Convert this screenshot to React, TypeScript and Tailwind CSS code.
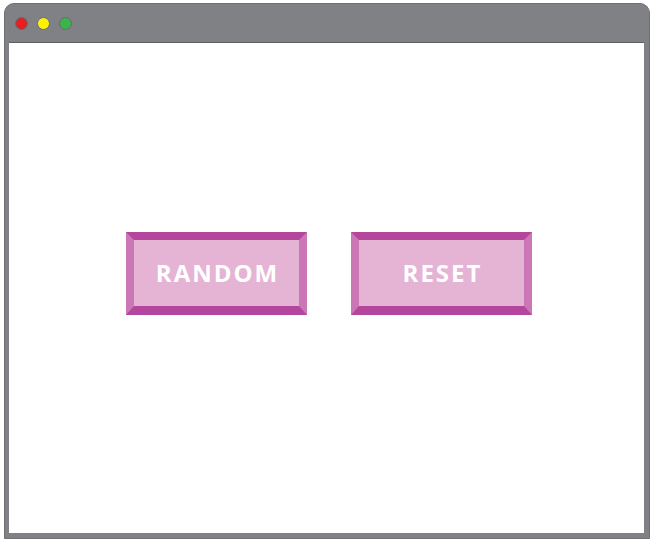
import React from 'react';

const Bevel: React.FC<{ label: string }> = ({ label }) => (
    <button className="w-[181px] h-[83px] bg-[#e5b4d4] border-x-8 border-t-8 border-b-[9px] border-t-[#b4469d] border-b-[#b4469d] border-x-[#cb76b5] flex items-center justify-center">
        <span className="text-white font-bold text-[24px] leading-none tracking-[2px] pl-[2px] font-['Open_Sans',sans-serif]">{label}</span>
    </button>
);

export default function App() {
    return (
        <div className="w-[654px] h-[542px] bg-white pt-[3px] pl-[4px]">
            <div className="w-[646px] h-[536px] rounded-t-[10px] bg-[#808185] border border-[#6f7074] flex flex-col">
                <div className="h-[38px] flex items-center gap-[9px] pl-[10px] pt-[1px]">
                    <span className="w-[13px] h-[13px] rounded-full bg-[#ec1c24] border border-[#6b6b6b]" />
                    <span className="w-[13px] h-[13px] rounded-full bg-[#fff200] border border-[#6b6b6b]" />
                    <span className="w-[13px] h-[13px] rounded-full bg-[#39b54a] border border-[#6b6b6b]" />
                </div>
                <div className="flex-1 ml-[4px] mr-[5px] mb-[5px] bg-white border-t border-[#5e5f63] flex items-start pl-[117px] pt-[189px] gap-[44px]">
                    <Bevel label="RANDOM" />
                    <Bevel label="RESET" />
                </div>
            </div>
        </div>
    );
}
